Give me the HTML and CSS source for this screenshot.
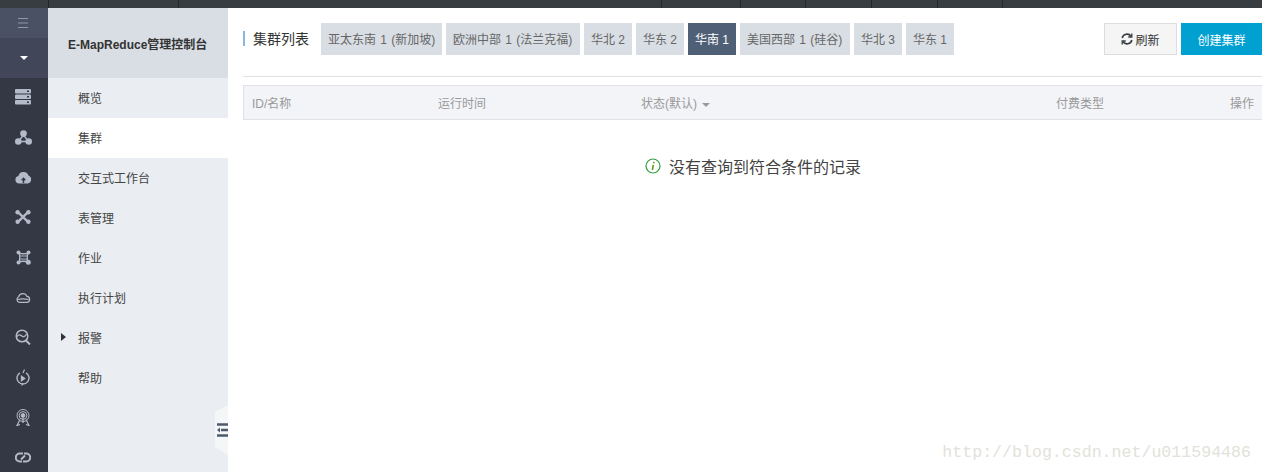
FILE: index.html
```html
<!DOCTYPE html>
<html lang="zh-CN">
<head>
    <meta charset="UTF-8">
    <meta name="viewport" content="width=device-width, initial-scale=1.0">
    <title>E-MapReduce管理控制台</title>
    <link rel="stylesheet" href="styles.css">
</head>
<body>
    <!-- Top bar -->
    <div class="topbar">
        <span class="seg seg-1"></span>
        <span class="seg seg-2"></span>
        <span class="seg seg-3"></span>
        <span class="seg seg-4"></span>
        <span class="seg seg-5"></span>
        <span class="seg seg-6"></span>
        <span class="seg seg-7"></span>
        <span class="seg seg-8"></span>
    </div>

    <div class="app">
        <!-- Icon rail -->
        <nav class="rail">
            <div class="rail-toggle">
                <svg width="12" height="12" viewBox="0 0 12 12"><path d="M1 1.500h10M1 6h10M1 10.500h10" stroke="#8f98aa" stroke-width="1" fill="none"/></svg>
            </div>
            <div class="rail-fold"><span class="fold-arrow"></span></div>
            <div class="rail-icon">
                <svg width="18" height="16" viewBox="0 0 18 16" fill="#b3bac8"><rect x="1" y="0" width="16" height="4.500" rx="1"/><rect x="1" y="5.500" width="16" height="4.500" rx="1"/><rect x="1" y="11" width="16" height="4.500" rx="1"/><rect x="13" y="1.500" width="2" height="1.500" fill="#333844"/><rect x="13" y="7" width="2" height="1.500" fill="#333844"/><rect x="13" y="12.500" width="2" height="1.500" fill="#333844"/></svg>
            </div>
            <div class="rail-icon">
                <svg width="17" height="15" viewBox="0 0 17 15" fill="#b3bac8"><circle cx="8.500" cy="3.600" r="3.300"/><circle cx="3.300" cy="11.500" r="3.300"/><circle cx="13.700" cy="11.500" r="3.300"/><path d="M8.500 5L3.300 11.500h10.400z" fill="none" stroke="#b3bac8" stroke-width="1.400"/></svg>
            </div>
            <div class="rail-icon">
                <svg width="17" height="14" viewBox="0 0 17 14"><path d="M4 13.500a3.800 3.800 0 0 1-.6-7.500A5.300 5.300 0 0 1 13.500 5.500 4.200 4.200 0 0 1 12.800 13.500z" fill="#b3bac8"/><path d="M8.500 13V8.500M6.700 10.300l1.800-2 1.800 2" stroke="#333844" stroke-width="1.400" fill="none"/></svg>
            </div>
            <div class="rail-icon">
                <svg width="16" height="14" viewBox="0 0 16 14"><path d="M3 2.200l10 9.600M13 2.200L3 11.800" stroke="#b3bac8" stroke-width="2.400"/><circle cx="2.600" cy="2.200" r="2.200" fill="#b3bac8"/><circle cx="13.400" cy="2.200" r="2.200" fill="#b3bac8"/><circle cx="2.600" cy="11.800" r="2.200" fill="#b3bac8"/><circle cx="13.400" cy="11.800" r="2.200" fill="#b3bac8"/></svg>
            </div>
            <div class="rail-icon">
                <svg width="15" height="15" viewBox="0 0 15 15"><path d="M3 3c1.500 1 7.500 1 9 0-1 1.500-1 7.500 0 9-1.500-1-7.500-1-9 0 1-1.500 1-7.500 0-9z" stroke="#b3bac8" stroke-width="1.300" fill="none"/><path d="M4 6h7M4 9h7" stroke="#b3bac8" stroke-width="1"/><circle cx="2.500" cy="2.500" r="2" fill="#b3bac8"/><circle cx="12.500" cy="2.500" r="2" fill="#b3bac8"/><circle cx="2.500" cy="12.500" r="2" fill="#b3bac8"/><circle cx="12.300" cy="12.300" r="2.500" fill="#b3bac8"/></svg>
            </div>
            <div class="rail-icon">
                <svg width="16" height="11" viewBox="0 0 16 11"><path d="M4 10.300a3 3 0 0 1-.4-5.500A4.500 4.500 0 0 1 12 4.400a3 3 0 0 1 .3 5.900z M2.500 7.500c3-.6 8-.6 11 0" stroke="#b3bac8" stroke-width="1.200" fill="none"/></svg>
            </div>
            <div class="rail-icon">
                <svg width="16" height="16" viewBox="0 0 16 16"><circle cx="7" cy="7" r="5.800" stroke="#b3bac8" stroke-width="1.500" fill="none"/><path d="M10.500 11l4.500 4.500" stroke="#b3bac8" stroke-width="2"/><path d="M1.500 8c2-2.500 3.500-2.500 5-1.200s3 1.200 5-1.500" stroke="#b3bac8" stroke-width="1.300" fill="none"/></svg>
            </div>
            <div class="rail-icon">
                <svg width="14" height="17" viewBox="0 0 14 17"><path d="M4 3.800a6 6 0 1 0 6 0" stroke="#b3bac8" stroke-width="1.400" fill="none"/><path d="M8.500 0.500L7 4M5.500 16.500L7 14.500" stroke="#b3bac8" stroke-width="1.200"/><path d="M4.800 6l5 3.500-5 3.500z" fill="#b3bac8"/></svg>
            </div>
            <div class="rail-icon">
                <svg width="16" height="17" viewBox="0 0 16 17" fill="none" stroke="#b3bac8"><circle cx="8" cy="6.500" r="6" stroke-width="1"/><circle cx="8" cy="6.500" r="3.900" stroke-width="1"/><circle cx="8" cy="6.500" r="1.900" fill="#b3bac8"/><path d="M5 10.500l-3 6 3-1M11 10.500l3 6-3-1M8 9v5" stroke-width="1.200"/></svg>
            </div>
            <div class="rail-icon">
                <svg width="16" height="13" viewBox="0 0 16 13" fill="none" stroke="#b3bac8" stroke-width="2"><path d="M7 10.500H4.800a4 4 0 0 1 0-8H8"/><path d="M9 2.500h2.200a4 4 0 0 1 0 8H8"/><path d="M6 8.500l4-4"/></svg>
            </div>
        </nav>

        <!-- Second level menu -->
        <aside class="menu">
            <div class="menu-title">E-MapReduce管理控制台</div>
            <a class="menu-item">概览</a>
            <a class="menu-item active">集群</a>
            <a class="menu-item">交互式工作台</a>
            <a class="menu-item">表管理</a>
            <a class="menu-item">作业</a>
            <a class="menu-item">执行计划</a>
            <a class="menu-item has-sub">报警</a>
            <a class="menu-item">帮助</a>
            <div class="menu-collapse">
                <svg width="11" height="14" viewBox="0 0 11 14"><path d="M0 1.500h11M4 7h7M0 12.500h11" stroke="#4d5a6e" stroke-width="2.400"/><path d="M0 7l3-2.500v5z" fill="#4d5a6e"/></svg>
            </div>
        </aside>

        <!-- Main content -->
        <main class="content">
            <div class="toolbar">
                <h2 class="page-title">集群列表</h2>
                <div class="tabs">
                    <span class="tab tab-sea">亚太东南 1 (新加坡)</span>
                    <span class="tab tab-eu">欧洲中部 1 (法兰克福)</span>
                    <span class="tab">华北 2</span>
                    <span class="tab">华东 2</span>
                    <span class="tab current">华南 1</span>
                    <span class="tab tab-us">美国西部 1 (硅谷)</span>
                    <span class="tab">华北 3</span>
                    <span class="tab">华东 1</span>
                </div>
                <div class="actions">
                    <button class="btn btn-refresh">
                        <svg width="12" height="12" viewBox="0 0 12 12" fill="none" stroke="#373d41" stroke-width="1.600"><path d="M1.200 5A4.900 4.900 0 0 1 10 3.200M10.800 7A4.900 4.900 0 0 1 2 8.800"/><path d="M10.800 0.500v3.500H7.300M1.200 11.500V8h3.500" stroke-width="1.300"/></svg>
                        刷新
                    </button>
                    <button class="btn btn-create">创建集群</button>
                </div>
            </div>

            <div class="table-head">
                <span class="col col-name">ID/名称</span>
                <span class="col col-time">运行时间</span>
                <span class="col col-status">状态(默认)<i class="caret"></i></span>
                <span class="col col-pay">付费类型</span>
                <span class="col col-op">操作</span>
            </div>

            <div class="empty">
                <svg width="16" height="16" viewBox="0 0 16 16"><circle cx="8" cy="8" r="7" fill="none" stroke="#2f9e44" stroke-width="1.200"/><path d="M8.800 3.800v1.500M8.300 6.800l-.9 5.200" stroke="#6a9a1f" stroke-width="1.600" fill="none"/></svg>
                <span>没有查询到符合条件的记录</span>
            </div>
        </main>
    </div>

    <div class="watermark">http://blog.csdn.net/u011594486</div>
</body>
</html>
```

FILE: styles.css
```css
* {
    box-sizing: border-box;
}
html, body {
    height: 100%;
}
body {
    margin: 0;
    font-family: "Liberation Sans", "Noto Sans CJK SC", sans-serif;
    font-size: 12px;
    color: #333;
    background-color: #fff;
    overflow: hidden;
    display: flex;
    flex-direction: column;
}

/* top bar */
.topbar {
    display: flex;
    height: 8px;
    flex-shrink: 0;
    background-color: #373d41;
}
.seg {
    border-right: 1px solid #22272a;
}
.seg-1 { width: 49px; }
.seg-2 { width: 130px; }
.seg-3 { width: 483px; }
.seg-4 { width: 79px; }
.seg-5 { width: 65px; }
.seg-6 { width: 66px; }
.seg-7 { width: 66px; }
.seg-8 { width: 65px; }

.app {
    display: flex;
    flex: 1;
    min-height: 0;
}

/* icon rail */
.rail {
    width: 48px;
    flex-shrink: 0;
    background-color: #333844;
}
.rail-toggle {
    height: 30px;
    display: flex;
    align-items: center;
    justify-content: center;
    background-color: #4a5164;
    padding-right: 2px;
}
.rail-fold {
    height: 40px;
    display: flex;
    align-items: center;
    justify-content: center;
    background-color: #414759;
}
.fold-arrow {
    width: 0;
    height: 0;
    border-left: 4px solid transparent;
    border-right: 4px solid transparent;
    border-top: 4px solid #fff;
}
.rail-icon {
    height: 40px;
    display: flex;
    align-items: center;
    justify-content: center;
    padding: 0 2px 2px 0;
}

/* second level menu */
.menu {
    width: 180px;
    flex-shrink: 0;
    background-color: #eaedf1;
    position: relative;
}
.menu-title {
    height: 70px;
    display: flex;
    align-items: center;
    padding: 1px 0 0 20px;
    background-color: #d9dee4;
    font-size: 12px;
    font-weight: 700;
    color: #333;
}
.menu-item {
    display: block;
    height: 40px;
    line-height: 42px;
    padding-left: 30px;
    color: #444;
    position: relative;
}
.menu-item.active {
    background-color: #fff;
}
.has-sub::before {
    content: "";
    position: absolute;
    left: 13px;
    top: 15px;
    border-top: 4px solid transparent;
    border-bottom: 4px solid transparent;
    border-left: 5px solid #333;
}
.menu-collapse {
    position: absolute;
    right: 0;
    bottom: 17px;
    width: 13px;
    height: 50px;
    background-color: #f5f6f7;
    clip-path: polygon(0 14%, 100% 0, 100% 100%, 0 84%);
    display: flex;
    align-items: center;
    padding-left: 2px;
    overflow: hidden;
}
.menu-collapse svg {
    flex-shrink: 0;
}

/* main */
.content {
    flex: 1;
    min-width: 0;
    padding: 15px 0 0 15px;
}
.toolbar {
    display: flex;
    align-items: flex-start;
    height: 54px;
    border-bottom: 1px solid #e1e1e1;
}
.page-title {
    margin: 8px 0 0;
    padding-left: 8px;
    height: 15px;
    line-height: 16px;
    border-left: 2px solid #88b7e0;
    font-size: 14px;
    font-weight: 400;
    color: #333;
    width: 78px;
    white-space: nowrap;
}
.tabs {
    display: flex;
    gap: 4px;
}
.tab {
    width: 48px;
    height: 32px;
    line-height: 34px;
    padding-left: 7px;
    background-color: #d9dee4;
    color: #666;
    white-space: nowrap;
}
.tab-sea { width: 121px; word-spacing: 1px; }
.tab-eu { width: 134px; word-spacing: 1px; }
.tab-us { width: 110px; word-spacing: 1px; }
.tab.current {
    background-color: #4f6076;
    color: #fff;
}
.actions {
    margin-left: auto;
    display: flex;
    gap: 4px;
}
.btn {
    height: 32px;
    border: 0;
    padding: 0;
    font-family: inherit;
    font-size: 12px;
}
.btn-refresh {
    width: 73px;
    display: flex;
    align-items: center;
    justify-content: center;
    gap: 2px;
    background-color: #f5f5f5;
    border: 1px solid #ddd;
    color: #333;
}
.btn-create {
    width: 81px;
    background-color: #00a0d0;
    color: #fff;
}

/* table */
.table-head {
    display: flex;
    align-items: center;
    height: 35px;
    margin-top: 8px;
    background-color: #f3f4f8;
    border: 1px solid #e1e2e8;
    border-right: 0;
    color: #999;
}
.col {
    white-space: nowrap;
}
.col-name { width: 194px; padding-left: 8px; }
.col-time { width: 203px; }
.col-status { width: 415px; }
.col-pay { width: 126px; }
.col-op { flex: 1; text-align: right; padding-right: 8px; }
.caret {
    display: inline-block;
    margin-left: 5px;
    vertical-align: middle;
    border-left: 4px solid transparent;
    border-right: 4px solid transparent;
    border-top: 4px solid #999;
}

.empty {
    display: flex;
    align-items: center;
    gap: 8px;
    margin-top: 36px;
    padding-left: 402px;
    height: 20px;
    font-size: 16px;
    color: #444;
}

.watermark {
    position: absolute;
    right: 11px;
    bottom: 9px;
    font-family: "Liberation Mono", monospace;
    font-size: 16.6px;
    line-height: 20px;
    color: #e2e2da;
    white-space: nowrap;
}
```
